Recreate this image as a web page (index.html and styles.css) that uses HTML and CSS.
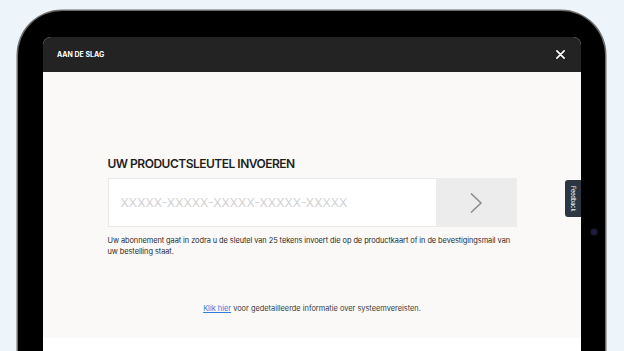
FILE: index.html
```html
<!DOCTYPE html>
<html lang="nl">
<head>
    <meta charset="UTF-8">
    <meta name="viewport" content="width=device-width, initial-scale=1.0">
    <title>Aan de slag</title>
    <link rel="stylesheet" href="styles.css">
</head>
<body>
    <div class="device">
        <span class="camera"></span>
        <div class="screen">
            <div class="modal-header">
                <span class="modal-title">AAN DE SLAG</span>
                <button class="modal-close" aria-label="Sluiten">
                    <svg width="10" height="10" viewBox="0 0 10 10"><path d="M1 1L9 9M9 1L1 9" stroke="#fff" stroke-width="1.8" stroke-linecap="round"/></svg>
                </button>
            </div>
            <div class="modal-body">
                <div class="key-form">
                    <h2>UW PRODUCTSLEUTEL INVOEREN</h2>
                    <div class="key-row">
                        <input class="key-input" type="text" placeholder="XXXXX-XXXXX-XXXXX-XXXXX-XXXXX">
                        <button class="key-submit" aria-label="Verder">
                            <svg width="14" height="22" viewBox="0 0 14 22"><path d="M2 1.5L12 11L2 20.5" fill="none" stroke="#8a8a8a" stroke-width="1.5"/></svg>
                        </button>
                    </div>
                    <p class="key-help">Uw abonnement gaat in zodra u de sleutel van 25 tekens invoert die op de productkaart of in de bevestigingsmail van uw bestelling staat.</p>
                </div>
                <p class="requirements"><a href="#">Klik hier</a> voor gedetailleerde informatie over systeemvereisten.</p>
            </div>
            <div class="modal-footer"></div>
            <div class="feedback-tab">Feedback</div>
        </div>
    </div>
</body>
</html>
```

FILE: styles.css
```css
body {
    margin: 0;
    background-color: #eef5fa;
    font-family: 'Inter', 'Liberation Sans', sans-serif;
    color: #222;
    overflow: hidden;
    height: 351px;
}
.device {
    position: relative;
    margin: 11px 19px 0 18px;
    padding: 26px 24px 0 25px;
    background: #000;
    border-radius: 44px 44px 0 0;
    box-shadow: 0 0 0 1.5px #6b6b6b;
    height: 400px;
}
.camera {
    position: absolute;
    right: 8px;
    top: 218px;
    width: 6px;
    height: 6px;
    border-radius: 50%;
    background: #1b1d3a;
    box-shadow: 0 0 0 1px #0d0d1a;
}
.screen {
    position: relative;
    background: #fff;
    border-radius: 8px 8px 0 0;
    overflow: hidden;
    height: 400px;
}
.modal-header {
    display: flex;
    align-items: center;
    justify-content: space-between;
    height: 35px;
    padding: 0 16px 0 14px;
    background: #232323;
}
.modal-title {
    color: #fff;
    font-size: 7px;
    font-weight: 700;
}
.modal-close {
    background: none;
    border: none;
    padding: 0;
    display: flex;
    cursor: pointer;
}
.modal-close svg {
    width: 9px;
    height: 9px;
}
.modal-body {
    background: #faf9f7;
    height: 266px;
    display: flex;
    flex-direction: column;
    align-items: center;
    box-sizing: border-box;
    padding-top: 85px;
}
.key-form {
    width: 409px;
}
.key-form h2 {
    margin: 0 0 7px;
    font-size: 12px;
    line-height: 14px;
    font-weight: 600;
    color: #1e1e1e;
    letter-spacing: -0.5px;
}
.key-row {
    display: flex;
    height: 49px;
}
.key-input {
    flex: 1;
    min-width: 0;
    border: 1px solid #e9e8e6;
    border-right: none;
    background: #fff;
    padding: 0 12px;
    font-family: inherit;
    font-size: 12.2px;
    color: #333;
    outline: none;
}
.key-input::placeholder {
    color: #d2d2d2;
}
.key-submit {
    width: 81px;
    border: none;
    background: #ececec;
    display: flex;
    align-items: center;
    justify-content: center;
    cursor: pointer;
}
.key-help {
    margin: 8px 0 0;
    font-size: 7.4px;
    line-height: 11px;
    letter-spacing: -0.06px;
    color: #2a2a2a;
}
.requirements {
    margin: 47px 0 0;
    font-size: 7.4px;
    color: #3a3a3a;
}
.requirements a {
    color: #2f7de1;
}
.modal-footer {
    background: #fff;
}
.feedback-tab {
    position: absolute;
    right: 0;
    top: 143px;
    width: 16px;
    height: 37px;
    background: #2b3640;
    color: #fff;
    font-size: 5.5px;
    writing-mode: vertical-rl;
    display: flex;
    align-items: center;
    justify-content: center;
    border-radius: 3px 0 0 3px;
}
```
